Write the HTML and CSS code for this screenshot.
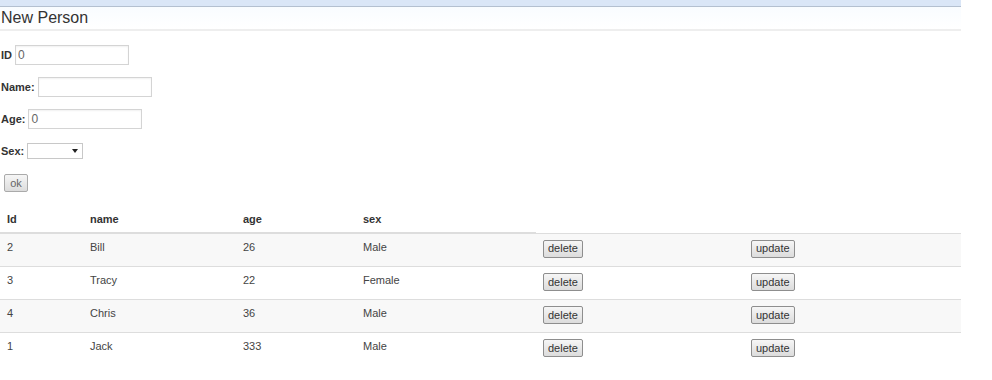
FILE: index.html
```html
<!DOCTYPE html>
<html lang="en">
<head>
    <meta charset="UTF-8">
    <title>Person</title>
    <link rel="stylesheet" href="styles.css">
</head>
<body>
    <div class="page">
        <div class="topbar"></div>
        <h2 class="title">New Person</h2>

        <form class="person-form">
            <div class="field">
                <label for="pid">ID</label>
                <input type="text" id="pid" value="0">
            </div>
            <div class="field">
                <label for="pname">Name:</label>
                <input type="text" id="pname">
            </div>
            <div class="field">
                <label for="page">Age:</label>
                <input type="text" id="page" value="0">
            </div>
            <div class="field">
                <label for="psex">Sex:</label>
                <span class="select-wrap">
                    <select id="psex">
                        <option></option>
                        <option>Male</option>
                        <option>Female</option>
                    </select>
                </span>
            </div>
            <div class="field">
                <button type="button" class="btn btn-ok">ok</button>
            </div>
        </form>

        <table class="people">
            <thead>
                <tr>
                    <th class="c-id">Id</th>
                    <th class="c-name">name</th>
                    <th class="c-age">age</th>
                    <th class="c-sex">sex</th>
                </tr>
            </thead>
            <tbody>
                <tr>
                    <td>2</td><td>Bill</td><td>26</td><td>Male</td>
                    <td class="c-del"><button class="btn">delete</button></td>
                    <td><button class="btn">update</button></td>
                </tr>
                <tr>
                    <td>3</td><td>Tracy</td><td>22</td><td>Female</td>
                    <td class="c-del"><button class="btn">delete</button></td>
                    <td><button class="btn">update</button></td>
                </tr>
                <tr>
                    <td>4</td><td>Chris</td><td>36</td><td>Male</td>
                    <td class="c-del"><button class="btn">delete</button></td>
                    <td><button class="btn">update</button></td>
                </tr>
                <tr>
                    <td>1</td><td>Jack</td><td>333</td><td>Male</td>
                    <td class="c-del"><button class="btn">delete</button></td>
                    <td><button class="btn">update</button></td>
                </tr>
            </tbody>
        </table>
    </div>
</body>
</html>
```

FILE: styles.css
```css
body {
    margin: 0;
    font-family: "Liberation Sans", Arial, sans-serif;
    font-size: 11px;
    color: #333;
    background-color: #fff;
}
.page {
    width: 961px;
}
.topbar {
    height: 6px;
    background-color: #dae6f7;
    border-bottom: 1px solid #b4c0d0;
}
.title {
    margin: 0;
    height: 22px;
    line-height: 22px;
    padding-left: 1px;
    font-size: 16px;
    font-weight: normal;
    color: #333;
    border-bottom: 2px solid #eee;
    background: linear-gradient(#f9fcff, #fff);
}
.person-form {
    margin: 14px 0 0;
}
.field {
    display: flex;
    align-items: center;
    height: 20px;
    margin-bottom: 12px;
}
.field label {
    font-weight: bold;
    font-size: 11px;
    color: #333;
    margin-left: 1px;
    margin-right: 3px;
}
.field input[type="text"] {
    box-sizing: border-box;
    width: 114px;
    height: 20px;
    padding: 0 2px;
    border: 1px solid #d4d4d4;
    box-shadow: inset 0 1px 2px rgba(0, 0, 0, 0.06);
    font-family: "Liberation Sans", Arial, sans-serif;
    font-size: 12px;
    color: #666;
}
.select-wrap {
    position: relative;
    display: inline-block;
}
.select-wrap select {
    appearance: none;
    -webkit-appearance: none;
    box-sizing: border-box;
    width: 56px;
    height: 16px;
    border: 1px solid #c8c8c8;
    border-radius: 0;
    background: #fff;
    font-size: 11px;
    display: block;
}
.select-wrap::after {
    content: "";
    position: absolute;
    right: 5px;
    top: 6px;
    border-left: 3px solid transparent;
    border-right: 3px solid transparent;
    border-top: 4px solid #222;
    pointer-events: none;
}
.btn {
    box-sizing: border-box;
    height: 18px;
    padding: 0 4px;
    border: 1px solid #8e8e8e;
    border-radius: 2px;
    background: linear-gradient(#f6f6f6, #dcdcdc);
    font-family: "Liberation Sans", Arial, sans-serif;
    font-size: 11px;
    color: #333;
    line-height: 15px;
    cursor: pointer;
}
.btn-ok {
    margin-left: 4px;
    width: 24px;
    padding: 0;
    color: #666;
    border-color: #aaa;
}
.people {
    width: 961px;
    border-collapse: collapse;
    margin-top: 0;
}
.people th,
.people td {
    text-align: left;
    padding: 4px 7px 10px;
    line-height: 18px;
    vertical-align: top;
}
.people th {
    font-weight: bold;
    padding-top: 5px;
    padding-bottom: 4px;
    border-bottom: 2px solid #ddd;
}
.people td {
    border-top: 1px solid #ddd;
    color: #444;
}
.people td .btn {
    vertical-align: top;
    position: relative;
    top: 2px;
}
.people tbody tr:nth-child(odd) td {
    background-color: #f8f8f8;
}
.c-id { width: 69px; }
.c-name { width: 139px; }
.c-age { width: 106px; }
.c-sex { width: 166px; }
.c-del { width: 194px; }
```
